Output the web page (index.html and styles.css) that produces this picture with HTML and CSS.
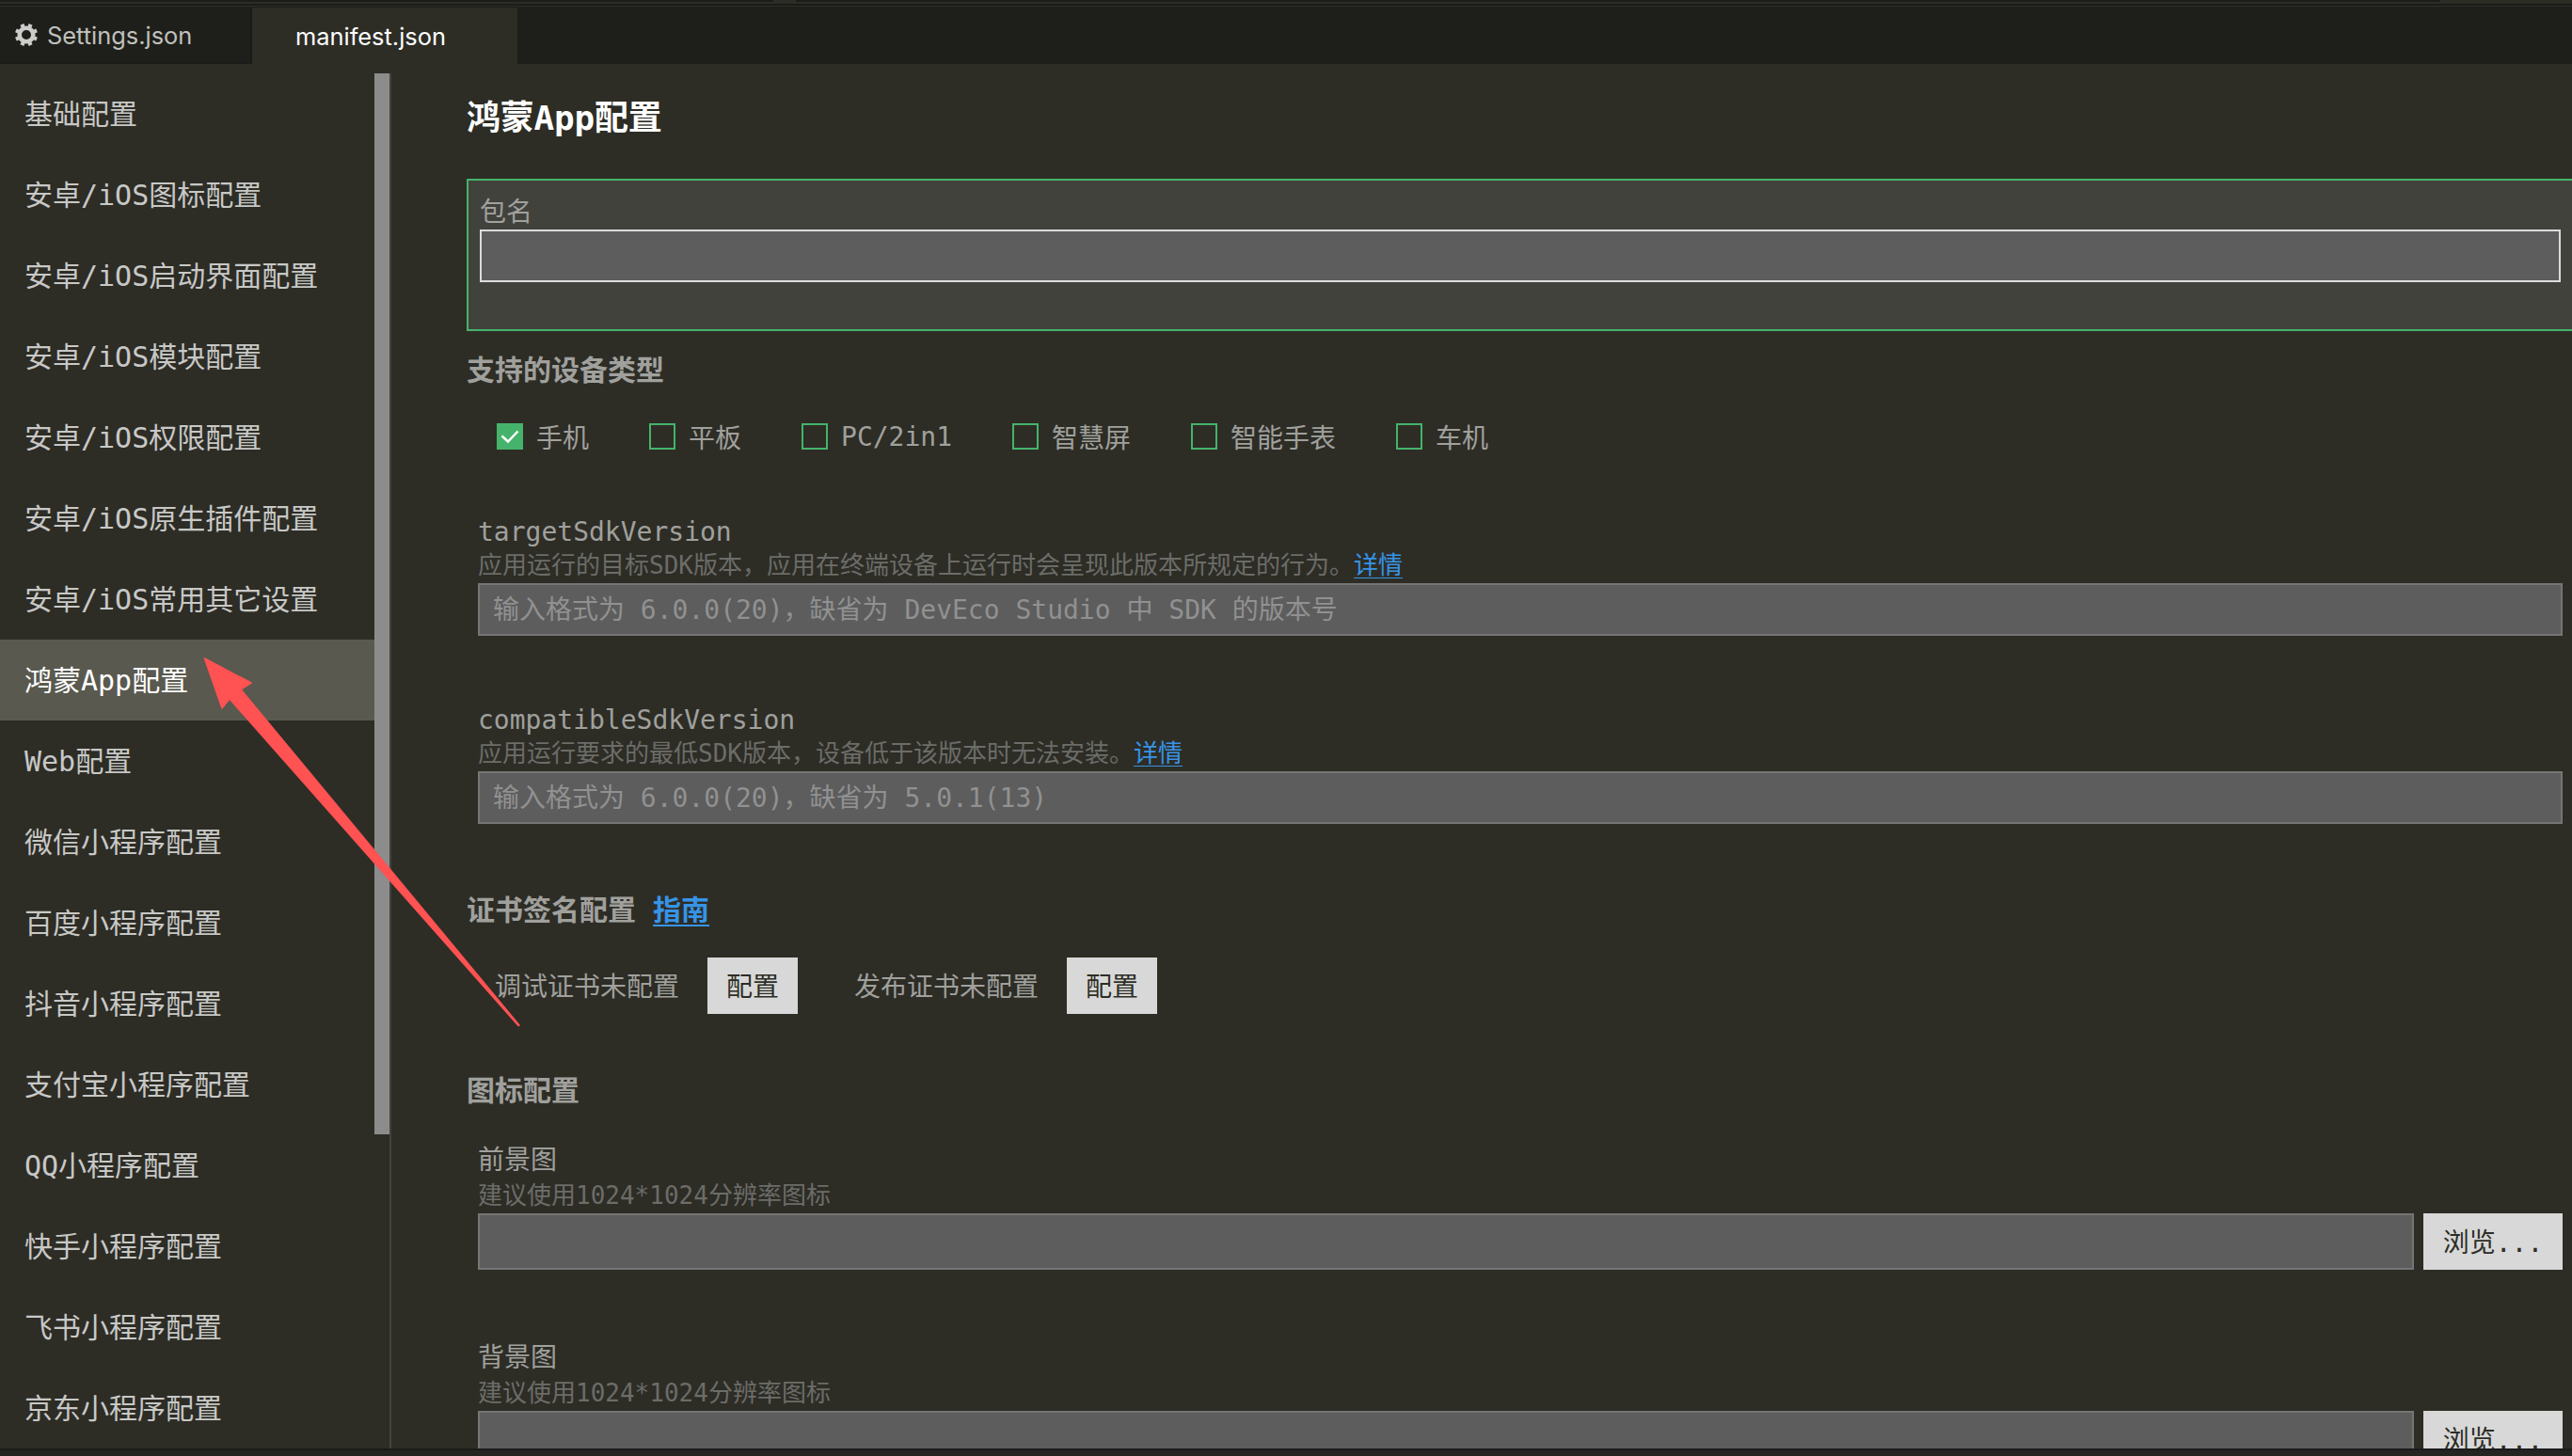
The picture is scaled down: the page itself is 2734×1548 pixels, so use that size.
FILE: index.html
```html
<!DOCTYPE html>
<html lang="zh-CN">
<head>
  <meta charset="UTF-8">
  <title>manifest.json</title>
  <link rel="stylesheet" href="styles.css">
</head>
<body>
<div class="window">
  <div class="topline"><span class="seg seg-left"></span><span class="seg seg-mid"></span></div>
  <div class="tabs">
    <div class="tab">
      <svg class="gear" viewBox="0 0 24 24">
        <circle cx="12" cy="12" r="7.3" fill="none" stroke="#ccccca" stroke-width="4.6"/>
        <g stroke="#ccccca" stroke-width="4.2" stroke-linecap="butt" transform="rotate(22.5 12 12)">
          <path d="M12 0v5M12 19v5M0 12h5M19 12h5"/>
          <path d="M3.5 3.5l3.6 3.6M16.9 16.9l3.6 3.6M3.5 20.5l3.6-3.6M16.9 7.1l3.6-3.6"/>
        </g>
      </svg>
      <span>Settings.json</span>
    </div>
    <div class="tab active"><span>manifest.json</span></div>
  </div>
  <div class="content">
    <div class="sidebar">
      <ul class="menu">
        <li>基础配置</li>
        <li>安卓/iOS图标配置</li>
        <li>安卓/iOS启动界面配置</li>
        <li>安卓/iOS模块配置</li>
        <li>安卓/iOS权限配置</li>
        <li>安卓/iOS原生插件配置</li>
        <li>安卓/iOS常用其它设置</li>
        <li class="active">鸿蒙App配置</li>
        <li>Web配置</li>
        <li>微信小程序配置</li>
        <li>百度小程序配置</li>
        <li>抖音小程序配置</li>
        <li>支付宝小程序配置</li>
        <li>QQ小程序配置</li>
        <li>快手小程序配置</li>
        <li>飞书小程序配置</li>
        <li>京东小程序配置</li>
      </ul>
      <div class="scrollbar"><div class="thumb"></div></div>
    </div>
    <div class="main">
      <h1>鸿蒙App配置</h1>
      <div class="package">
        <label for="package">包名</label>
        <input type="text" id="package">
      </div>

      <h2 class="first">支持的设备类型</h2>
      <div class="devices">
        <div class="check"><span class="box checked"><svg viewBox="0 0 28 28"><path d="M5.500 13.500l6.500 6 10.500-11" fill="none" stroke="#fff" stroke-width="2.500"/></svg></span>手机</div>
        <div class="check"><span class="box"></span>平板</div>
        <div class="check"><span class="box"></span>PC/2in1</div>
        <div class="check"><span class="box"></span>智慧屏</div>
        <div class="check"><span class="box"></span>智能手表</div>
        <div class="check"><span class="box"></span>车机</div>
      </div>

      <div class="field">
        <label for="target">targetSdkVersion</label>
        <p>应用运行的目标SDK版本，应用在终端设备上运行时会呈现此版本所规定的行为。<a href="#">详情</a></p>
        <input type="text" id="target" placeholder="输入格式为 6.0.0(20)，缺省为 DevEco Studio 中 SDK 的版本号">
      </div>
      <div class="field">
        <label for="compatible">compatibleSdkVersion</label>
        <p>应用运行要求的最低SDK版本，设备低于该版本时无法安装。<a href="#">详情</a></p>
        <input type="text" id="compatible" placeholder="输入格式为 6.0.0(20)，缺省为 5.0.1(13)">
      </div>

      <h2 class="cert">证书签名配置 <a href="#">指南</a></h2>
      <div class="certs">
        <span>调试证书未配置</span>
        <button type="button">配置</button>
        <span>发布证书未配置</span>
        <button type="button">配置</button>
      </div>

      <h2 class="icons">图标配置</h2>
      <div class="field file">
        <label for="foreground">前景图</label>
        <p>建议使用1024*1024分辨率图标</p>
        <div class="row">
          <input type="text" id="foreground">
          <button type="button">浏览...</button>
        </div>
      </div>
      <div class="field file">
        <label for="background">背景图</label>
        <p>建议使用1024*1024分辨率图标</p>
        <div class="row">
          <input type="text" id="background">
          <button type="button">浏览...</button>
        </div>
      </div>
    </div>
  </div>
  <div class="status"></div>
  <svg class="arrow" viewBox="0 0 340 396">
    <path d="M1.500 1L51 27 40 34 336 391 335 391.500 28 44 20 54Z" fill="#ff5252" stroke="#ff5252" stroke-width="1.500" stroke-linejoin="round"/>
  </svg>
</div>
</body>
</html>
```
FILE: styles.css
```css
* {
  box-sizing: border-box;
}
body {
  margin: 0;
  background-color: #2d2d26;
  color: #a0a09d;
  font-family: "DejaVu Sans Mono", "Noto Sans CJK SC", monospace;
  font-size: 28px;
}
.window {
  position: relative;
  display: flex;
  flex-direction: column;
  height: 1548px;
  overflow: hidden;
}
.topline {
  display: flex;
  gap: 24px;
  height: 6px;
  border-bottom: 2px solid #1b1b1b;
}
.seg {
  height: 2px;
  background-color: #1b1b1b;
}
.seg-left {
  width: 822px;
}
.seg-mid {
  width: 1748px;
}
.tabs {
  display: flex;
  height: 62px;
  background-color: #1e1f1a;
  border-top: 1px solid #2d2d26;
  font-family: Inter, sans-serif;
  font-size: 25.4px;
}
.tab {
  display: flex;
  align-items: center;
  gap: 10px;
  width: 268px;
  padding: 2px 0 0 16px;
  color: #c0c0bd;
  border-right: 2px solid #1b1b1b;
  border-bottom: 2px solid #1b1b1b;
}
.tab.active {
  width: 282px;
  padding: 0 0 0 46px;
  border: none;
  border-top: 1px solid #1b1b1b;
  background-color: #2d2d26;
  color: #fff;
}
.gear {
  width: 24px;
  height: 24px;
  margin-bottom: 2px;
}
.content {
  display: flex;
  height: 1472px;
  overflow: hidden;
}
.sidebar {
  display: flex;
  width: 416px;
  padding-top: 10px;
  flex-shrink: 0;
}
.menu {
  width: 398px;
  margin: 0;
  padding: 0;
  list-style: none;
  font-size: 30px;
  color: #c8c8c6;
}
.menu li {
  height: 86px;
  padding-left: 26px;
  line-height: 88px;
  white-space: nowrap;
}
.menu li.active {
  background-color: #59594f;
  color: #fff;
}
.scrollbar {
  width: 18px;
  height: 1462px;
  border-right: 2px solid #43433e;
}
.thumb {
  height: 1128px;
  background-color: #8c8c8c;
}
.main {
  flex: 1;
  min-width: 0;
  padding-left: 80px;
}
h1 {
  height: 122px;
  margin: 0;
  line-height: 116px;
  font-size: 36px;
  letter-spacing: -0.2px;
  color: #fff;
}
h2 {
  height: 76px;
  margin: 0;
  line-height: 76px;
  font-size: 30px;
}
h2.first {
  height: 82px;
  line-height: 84px;
}
h2.cert {
  margin-top: 54px;
}
h2.icons {
  margin-top: 44px;
}
a {
  color: #3794e6;
  text-decoration-thickness: 1px;
  text-underline-offset: 4px;
  text-decoration-skip-ink: none;
}
h2 a {
  text-decoration-thickness: 2px;
  text-underline-offset: 5px;
}
label {
  display: block;
  height: 38px;
  line-height: 40px;
}
input {
  display: block;
  width: 100%;
  height: 56px;
  padding: 0 14px;
  border: 2px solid #757575;
  background-color: #5d5d5d;
  color: #fff;
  font: inherit;
}
input::placeholder {
  color: #919191;
}
button {
  height: 60px;
  padding: 0 20px 2px;
  border: none;
  background-color: #d8d8d8;
  color: #2d2d26;
  font: inherit;
}
.package {
  height: 162px;
  padding: 14px 12px 0 12px;
  border: 2px solid #45b36b;
  border-right: none;
  background-color: #42423d;
}
.package input {
  border-color: #dcdcdc;
}
.devices {
  display: flex;
  gap: 64px;
  height: 60px;
  margin-bottom: 52px;
  padding-left: 32px;
}
.check {
  display: flex;
  align-items: center;
  gap: 14px;
}
.box {
  width: 28px;
  height: 28px;
  border: 2px solid #45b36b;
}
.box.checked {
  border: none;
  background-color: #45b36b;
}
.box svg {
  display: block;
}
.field {
  padding: 0 10px 0 12px;
}
.field + .field {
  margin-top: 70px;
}
.field p {
  height: 36px;
  margin: 0;
  line-height: 35px;
  font-size: 26px;
  color: #6c6c68;
}
.certs {
  display: flex;
  align-items: center;
  gap: 30px;
  margin-top: 12px;
  padding-left: 30px;
}
.certs span {
  padding-bottom: 2px;
}
.certs button {
  width: 96px;
  margin-right: 30px;
}
.file {
  padding-top: 16px;
}
.field + .file {
  margin-top: 58px;
}
.field.file p {
  height: 38px;
  line-height: 38px;
}
.row {
  display: flex;
  gap: 10px;
}
.row input {
  height: 60px;
}
.row button {
  width: 148px;
  flex-shrink: 0;
}
.status {
  height: 8px;
  border-top: 2px solid #1b1b1b;
  background-color: #252622;
}
/* pointer drawn over the menu and the form */
.arrow {
  position: absolute;
  left: 216px;
  top: 699px;
  width: 340px;
  height: 396px;
}
```
